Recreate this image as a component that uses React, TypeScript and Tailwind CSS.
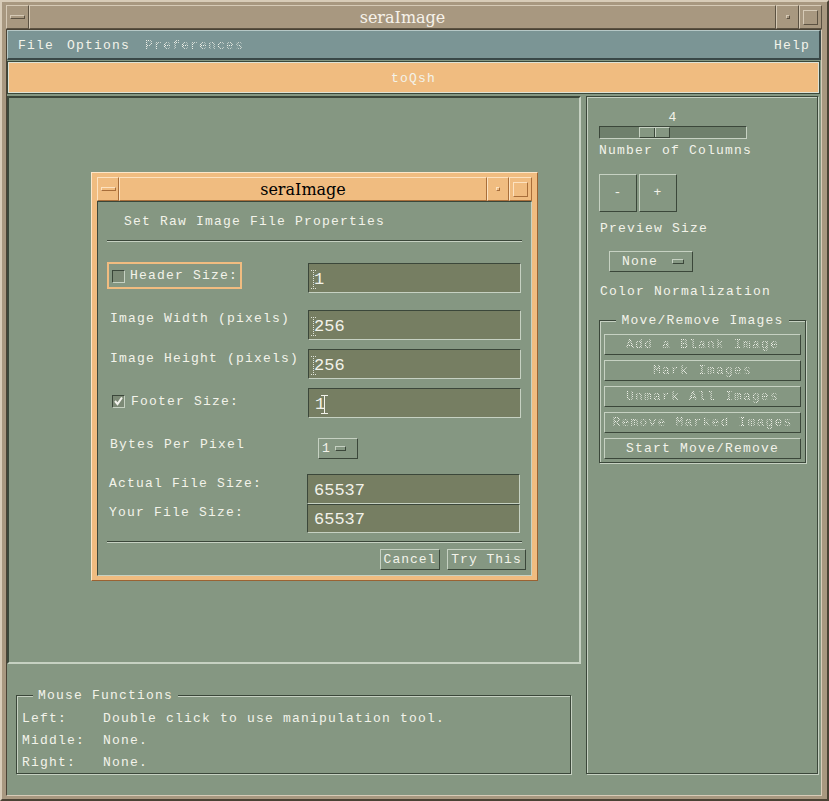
import React from "react";

// motif bevels
const raised = "border border-t-[#c6d1c2] border-l-[#c6d1c2] border-b-[#3b473a] border-r-[#3b473a]";
const sunken = "border border-t-[#3b473a] border-l-[#3b473a] border-b-[#c6d1c2] border-r-[#c6d1c2]";
const tanRaised = "border border-t-[#d6cab6] border-l-[#d6cab6] border-b-[#5c5242] border-r-[#5c5242]";
const orRaised = "border border-t-[#fde2c0] border-l-[#fde2c0] border-b-[#a86e3a] border-r-[#a86e3a]";
const stipple =
  "bg-[image:repeating-conic-gradient(#eef0e8_0%_25%,transparent_0%_50%)] bg-[length:2px_2px] bg-clip-text text-transparent";
const etched = "border border-[#3b473a] shadow-[inset_1px_1px_0_#c6d1c2,1px_1px_0_#c6d1c2]";

const DottedCursor = () => (
  <svg width="5" height="19" viewBox="0 0 5 19" className="shrink-0">
    <path d="M0 0.5h5M2.5 0v19M0 18.5h5" stroke="#dfe3d8" strokeWidth="1" strokeDasharray="1 1" fill="none" />
  </svg>
);

const IBeam = () => (
  <svg width="7" height="19" viewBox="0 0 7 19" className="shrink-0 ml-[-4px]">
    <path d="M0 0.5h7M3.5 0v19M0 18.5h7" stroke="#f2f2ea" strokeWidth="1" fill="none" />
  </svg>
);

interface FieldProps {
  value: string;
  cursor?: "dotted" | "solid";
  h?: string;
}

const Field = ({ value, cursor, h = "h-[30px]" }: FieldProps) => (
  <div
    className={`w-[213px] ${h} bg-[#767e62] ${sunken} flex items-center pl-[2px] pt-[3px] font-['Liberation_Mono',monospace] text-[17px] tracking-normal text-[#f2f2ea]`}
  >
    {cursor === "dotted" && <DottedCursor />}
    <span className={cursor === "dotted" ? "ml-[-2px]" : "ml-[4px]"}>{value}</span>
    {cursor === "solid" && <IBeam />}
  </div>
);

const Check = ({ on }: { on?: boolean }) => (
  <div className={`w-[13px] h-[13px] shrink-0 bg-[#7c8a76] ${sunken} flex items-center justify-center`}>
    {on && (
      <svg width="9" height="9" viewBox="0 0 9 9">
        <path d="M1 4l2.5 3L8 0.5" stroke="#f4f4ee" strokeWidth="2" fill="none" />
      </svg>
    )}
  </div>
);

const Separator = () => <div className="mx-[9px] h-[2px] border-t border-t-[#3b473a] border-b border-b-[#c6d1c2]" />;

const Dialog = () => (
  <div
    className="absolute left-[82px] top-[74px] w-[447px] bg-[#f0bc80] border border-t-[#fde6c8] border-l-[#fde6c8] border-b-[#9a6232] border-r-[#9a6232] px-[5px] py-[4px] flex flex-col"
  >
    <div className="h-[24px] flex">
      <div className={`w-[22px] ${orRaised} flex items-center justify-center`}>
        <div className={`w-[15px] h-[4px] ${orRaised}`} />
      </div>
      <div
        className={`flex-1 ${orRaised} flex items-center justify-center pt-[2px] font-['DejaVu_Serif',serif] text-[16px] tracking-normal text-black`}
      >
        seraImage
      </div>
      <div className={`w-[22px] ${orRaised} flex items-center justify-center`}>
        <div className={`w-[4px] h-[4px] ${orRaised}`} />
      </div>
      <div className={`w-[23px] ${orRaised} flex items-center justify-center`}>
        <div className={`w-[15px] h-[15px] ${orRaised}`} />
      </div>
    </div>

    <div className={`bg-[#859782] ${sunken} flex flex-col`}>
      <div className="mt-[11px] pl-[26px] leading-[18px]">Set Raw Image File Properties</div>
      <div className="mt-[9px]">
        <Separator />
      </div>

      <div className="mt-[20px] flex pl-[12px]">
        <div className="w-[198px]">
          <div className="ml-[-3px] w-[135px] h-[27px] border-2 border-[#f0bc80] flex items-center pl-[3px] pt-[1px] gap-[5px]">
            <Check />
            <span>Header Size:</span>
          </div>
        </div>
        <div className="mt-[1px]">
          <Field value="1" cursor="dotted" />
        </div>
      </div>

      <div className="mt-[17px] flex pl-[12px]">
        <div className="w-[198px] leading-[18px]">Image Width (pixels)</div>
        <Field value="256" cursor="dotted" />
      </div>

      <div className="mt-[9px] flex pl-[12px]">
        <div className="w-[198px] leading-[18px] mt-[1px]">Image Height (pixels)</div>
        <Field value="256" cursor="dotted" />
      </div>

      <div className="mt-[9px] flex pl-[12px]">
        <div className="w-[198px] h-[16px] mt-[5px] flex items-center gap-[6px] pl-[2px]">
          <Check on />
          <span className="pt-[1px]">Footer Size:</span>
        </div>
        <Field value="1" cursor="solid" />
      </div>

      <div className="mt-[17px] flex pl-[12px]">
        <div className="w-[198px] leading-[18px] pt-[1px]">Bytes Per Pixel</div>
        <div className={`ml-[10px] mt-[3px] w-[40px] h-[21px] ${raised} flex items-center pl-[3px] gap-[4px]`}>
          <span className="pt-[1px]">1</span>
          <div className={`w-[11px] h-[5px] ${raised}`} />
        </div>
      </div>

      <div className="mt-[15px] flex pl-[12px]">
        <div className="w-[198px] leading-[18px] mt-[1px] ml-[-1px]">Actual File Size:</div>
        <Field value="65537" />
      </div>
      <div className="flex pl-[12px]">
        <div className="w-[198px] leading-[18px] ml-[-1px]">Your File Size:</div>
        <Field value="65537" h="h-[29px]" />
      </div>

      <div className="mt-[8px]">
        <Separator />
      </div>

      <div className="mt-[6px] mb-[5px] flex justify-end pr-[5px] gap-[7px] tracking-[1px]">
        <button className={`w-[60px] h-[21px] ${raised} flex items-center justify-center pt-[1px]`}>Cancel</button>
        <button className={`w-[79px] h-[21px] ${raised} flex items-center justify-center pt-[1px]`}>Try This</button>
      </div>
    </div>
  </div>
);

const moveButtons = [
  { label: "Add a Blank Image", off: true },
  { label: "Mark Images", off: true },
  { label: "Unmark All Images", off: true },
  { label: "Remove Marked Images", off: true },
  { label: "Start Move/Remove", off: false },
];

export default function App() {
  return (
    <div className="w-[829px] h-[801px] bg-[#a89880] border-2 border-t-[#d8ccb8] border-l-[#d8ccb8] border-b-[#4a4234] border-r-[#4a4234] pl-[4px] pr-[5px] pt-[3px] pb-[3px] flex flex-col font-['Liberation_Mono',monospace] text-[13px] tracking-[1.2px] text-[#f3f3ea] overflow-hidden">
      {/* window title */}
      <div className="h-[24px] flex shrink-0">
        <div className={`w-[23px] ${tanRaised} flex items-center justify-center`}>
          <div className={`w-[15px] h-[4px] ${tanRaised}`} />
        </div>
        <div
          className={`flex-1 ${tanRaised} flex items-center justify-center pt-[2px] font-['DejaVu_Serif',serif] text-[16px] tracking-normal text-[#f6f2ea]`}
        >
          seraImage
        </div>
        <div className={`w-[23px] ${tanRaised} flex items-center justify-center`}>
          <div className={`w-[4px] h-[4px] ${tanRaised}`} />
        </div>
        <div className={`w-[23px] ${tanRaised} flex items-center justify-center`}>
          <div className={`w-[15px] h-[15px] ${tanRaised}`} />
        </div>
      </div>

      {/* client area */}
      <div className="flex-1 flex flex-col bg-[#859782] border border-t-[#4a4234] border-l-[#4a4234] border-b-[#d8ccb8] border-r-[#d8ccb8]">
        <div className="h-[30px] shrink-0 bg-[#7b9595] border-t border-l border-t-[#b6c8c6] border-l-[#b6c8c6] border-b-2 border-r-2 border-b-[#394848] border-r-[#394848] flex items-center pl-[10px] pr-[9px] pt-[2px]">
          <span>File</span>
          <span className="ml-[13px]">Options</span>
          <span className={`ml-[15px] ${stipple}`}>Preferences</span>
          <span className="ml-auto">Help</span>
        </div>

        <div className="mt-[1px] mr-[1px] h-[33px] shrink-0 border border-[#3a483a]">
          <div className="h-full border border-[#dfe3d6] bg-[#f0bc80] flex items-center justify-center pt-[2px]">
            toQsh
          </div>
        </div>

        <div className="mt-[2px] flex">
          {/* left column */}
          <div className="flex flex-col">
            <div className="relative w-[574px] h-[568px] border-2 border-t-[#3b473a] border-l-[#3b473a] border-b-[#c6d1c2] border-r-[#c6d1c2]">
              <Dialog />
            </div>

            <fieldset className={`mt-[23px] ml-[9px] w-[555px] h-[87px] ${etched} pl-[5px] pt-[4px]`}>
              <legend className="ml-[11px] px-[5px] leading-[16px] pt-[1px] bg-[#859782]">Mouse Functions</legend>
              <div className="h-[22px] flex items-center">
                <span className="w-[81px]">Left:</span>
                <span>Double click to use manipulation tool.</span>
              </div>
              <div className="h-[22px] flex items-center">
                <span className="w-[81px]">Middle:</span>
                <span>None.</span>
              </div>
              <div className="h-[22px] flex items-center">
                <span className="w-[81px]">Right:</span>
                <span>None.</span>
              </div>
            </fieldset>
          </div>

          {/* right panel */}
          <div className={`ml-[5px] w-[232px] h-[678px] ${etched} pl-[12px] flex flex-col`}>
            <div className="mt-[12px] pt-[1px] w-[148px] text-center leading-[16px]">4</div>
            <div className="w-[148px] h-[13px] bg-[#6f806c] border border-t-[#3b473a] border-l-[#3b473a] border-b-[#c6d1c2] border-r-[#c6d1c2] flex">
              <div className="ml-[39px] w-[31px] h-full bg-[#859782] border border-t-[#c6d1c2] border-l-[#c6d1c2] border-b-[#3b473a] border-r-[#3b473a] flex justify-center">
                <div className="w-[2px] h-full border-l border-l-[#3b473a] border-r border-r-[#c6d1c2]" />
              </div>
            </div>
            <div className="mt-[2px] pt-[2px] leading-[16px]">Number of Columns</div>

            <div className="mt-[15px] flex gap-[2px]">
              <button className={`w-[38px] h-[38px] ${raised} flex items-center justify-center`}>-</button>
              <button className={`w-[38px] h-[38px] ${raised} flex items-center justify-center`}>+</button>
            </div>

            <div className="mt-[8px] pt-[1px] leading-[16px] ml-[1px]">Preview Size</div>

            <div className={`mt-[14px] ml-[10px] w-[84px] h-[21px] ${raised} flex items-center pl-[12px]`}>
              <span className="pt-[1px]">None</span>
              <div className={`ml-[14px] w-[12px] h-[5px] ${raised}`} />
            </div>

            <div className="mt-[10px] pt-[2px] leading-[16px] ml-[1px]">Color Normalization</div>

            <fieldset className={`mt-[12px] w-[207px] ${etched} px-[4px] pt-[5px] pb-[3px] flex flex-col gap-[5px]`}>
              <legend className="mx-auto px-[5px] leading-[16px] pt-[1px] bg-[#859782]">Move/Remove Images</legend>
              {moveButtons.map((b) => (
                <button key={b.label} className={`h-[21px] w-full ${raised} flex items-center justify-center pt-[1px]`}>
                  <span className={b.off ? stipple : ""}>{b.label}</span>
                </button>
              ))}
            </fieldset>
          </div>
        </div>
      </div>
    </div>
  );
}
